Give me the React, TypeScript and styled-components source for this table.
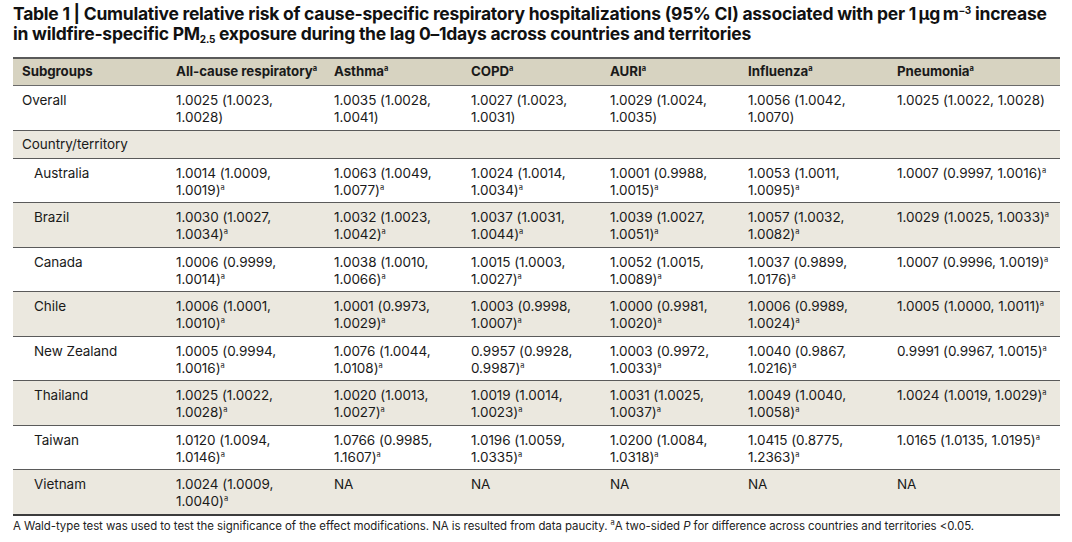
import React from "react";
import styled, { createGlobalStyle } from "styled-components";

const Global = createGlobalStyle`
  html, body { margin: 0; padding: 0; background: #ffffff; }
  body { font-family: "Inter", "Liberation Sans", sans-serif; color: #1a1a1a; }
`;

const Page = styled.div`
  width: 1072px;
  padding: 4px 12px 0 13px;
  box-sizing: border-box;
`;

const Title = styled.h1`
  margin: 0 0 13px 0;
  font-size: 17.5px;
  line-height: 20px;
  font-weight: 700;
  letter-spacing: -0.25px;
  white-space: nowrap;
  color: #111;
`;

const Sub = styled.sub`
  font-size: 10px;
  vertical-align: -3px;
  line-height: 0;
`;

const Sup = styled.sup<{ $small?: boolean }>`
  font-size: ${(p) => (p.$small ? "7.5px" : "10px")};
  vertical-align: ${(p) => (p.$small ? "5px" : "6px")};
  line-height: 0;
  font-weight: inherit;
`;

const Table = styled.table`
  width: 1047px;
  border-collapse: collapse;
  table-layout: fixed;
  font-size: 13.5px;
  line-height: 17px;
  border-top: 2px solid #5a5a5a;
  border-bottom: 2px solid #3c3c3c;
`;

const Col = styled.col<{ $w: number }>`
  width: ${(p) => p.$w}px;
`;

const HeadCell = styled.th`
  background: #d7d3c1;
  text-align: left;
  font-weight: 700;
  font-size: 13.3px;
  padding: 4px 4px 5px 9px;
  border-bottom: 1px solid #6a6a6a;
  letter-spacing: -0.05px;
  white-space: nowrap;
`;

const Row = styled.tr<{ $shade: boolean }>`
  background: ${(p) => (p.$shade ? "#ebe8df" : "#ffffff")};
  border-bottom: 1px solid #5a5a5a;
  &:last-child { border-bottom: none; }
`;

const Cell = styled.td<{ $indent?: boolean; $nowrap?: boolean }>`
  vertical-align: top;
  padding: 6px 9px 3.5px ${(p) => (p.$indent ? "21px" : "9px")};
  height: 34px;
  letter-spacing: -0.05px;
  white-space: ${(p) => (p.$nowrap ? "nowrap" : "normal")};
`;

const SectionCell = styled.td`
  padding: 5px 9px 5px 9px;
  letter-spacing: -0.05px;
`;

const Footnote = styled.p`
  margin: 3px 0 0 0;
  font-size: 11.45px;
  line-height: 14px;
  letter-spacing: -0.05px;
  color: #222;
`;

const widths = [154, 158, 137, 139, 138, 149, 172];
const headers = [
  { t: "Subgroups", a: false },
  { t: "All-cause respiratory", a: true },
  { t: "Asthma", a: true },
  { t: "COPD", a: true },
  { t: "AURI", a: true },
  { t: "Influenza", a: true },
  { t: "Pneumonia", a: true },
];

type V = [string, string, string] | null;
type R = { name: string; indent: boolean; sig: boolean; vals: V[] };

const rows: R[] = [
  {
    name: "Australia",
    indent: true,
    sig: true,
    vals: [
      ["1.0014", "1.0009", "1.0019"],
      ["1.0063", "1.0049", "1.0077"],
      ["1.0024", "1.0014", "1.0034"],
      ["1.0001", "0.9988", "1.0015"],
      ["1.0053", "1.0011", "1.0095"],
      ["1.0007", "0.9997", "1.0016"],
    ],
  },
  {
    name: "Brazil",
    indent: true,
    sig: true,
    vals: [
      ["1.0030", "1.0027", "1.0034"],
      ["1.0032", "1.0023", "1.0042"],
      ["1.0037", "1.0031", "1.0044"],
      ["1.0039", "1.0027", "1.0051"],
      ["1.0057", "1.0032", "1.0082"],
      ["1.0029", "1.0025", "1.0033"],
    ],
  },
  {
    name: "Canada",
    indent: true,
    sig: true,
    vals: [
      ["1.0006", "0.9999", "1.0014"],
      ["1.0038", "1.0010", "1.0066"],
      ["1.0015", "1.0003", "1.0027"],
      ["1.0052", "1.0015", "1.0089"],
      ["1.0037", "0.9899", "1.0176"],
      ["1.0007", "0.9996", "1.0019"],
    ],
  },
  {
    name: "Chile",
    indent: true,
    sig: true,
    vals: [
      ["1.0006", "1.0001", "1.0010"],
      ["1.0001", "0.9973", "1.0029"],
      ["1.0003", "0.9998", "1.0007"],
      ["1.0000", "0.9981", "1.0020"],
      ["1.0006", "0.9989", "1.0024"],
      ["1.0005", "1.0000", "1.0011"],
    ],
  },
  {
    name: "New Zealand",
    indent: true,
    sig: true,
    vals: [
      ["1.0005", "0.9994", "1.0016"],
      ["1.0076", "1.0044", "1.0108"],
      ["0.9957", "0.9928", "0.9987"],
      ["1.0003", "0.9972", "1.0033"],
      ["1.0040", "0.9867", "1.0216"],
      ["0.9991", "0.9967", "1.0015"],
    ],
  },
  {
    name: "Thailand",
    indent: true,
    sig: true,
    vals: [
      ["1.0025", "1.0022", "1.0028"],
      ["1.0020", "1.0013", "1.0027"],
      ["1.0019", "1.0014", "1.0023"],
      ["1.0031", "1.0025", "1.0037"],
      ["1.0049", "1.0040", "1.0058"],
      ["1.0024", "1.0019", "1.0029"],
    ],
  },
  {
    name: "Taiwan",
    indent: true,
    sig: true,
    vals: [
      ["1.0120", "1.0094", "1.0146"],
      ["1.0766", "0.9985", "1.1607"],
      ["1.0196", "1.0059", "1.0335"],
      ["1.0200", "1.0084", "1.0318"],
      ["1.0415", "0.8775", "1.2363"],
      ["1.0165", "1.0135", "1.0195"],
    ],
  },
  {
    name: "Vietnam",
    indent: true,
    sig: true,
    vals: [["1.0024", "1.0009", "1.0040"], null, null, null, null, null],
  },
];

const overall: V[] = [
  ["1.0025", "1.0023", "1.0028"],
  ["1.0035", "1.0028", "1.0041"],
  ["1.0027", "1.0023", "1.0031"],
  ["1.0029", "1.0024", "1.0035"],
  ["1.0056", "1.0042", "1.0070"],
  ["1.0025", "1.0022", "1.0028"],
];

function Value({ v, sig, last }: { v: V; sig: boolean; last: boolean }) {
  if (!v) return <>NA</>;
  const [e, lo, hi] = v;
  return (
    <>
      {e} ({lo},{last ? " " : <br />}
      {hi})
      {sig && <Sup $small>a</Sup>}
    </>
  );
}

export default function App() {
  return (
    <>
      <Global />
      <Page>
        <Title>
          Table 1 | Cumulative relative risk of cause-specific respiratory hospitalizations (95% CI) associated with per 1
          {"\u2009"}µg{"\u2009"}m<Sup>−3</Sup> increase
          <br />
          in wildfire-specific PM<Sub>2.5</Sub> exposure during the lag 0–1days across countries and territories
        </Title>
        <Table>
          <colgroup>
            {widths.map((w, i) => (
              <Col key={i} $w={w} />
            ))}
          </colgroup>
          <thead>
            <tr>
              {headers.map((h) => (
                <HeadCell key={h.t}>
                  {h.t}
                  {h.a && <Sup $small>a</Sup>}
                </HeadCell>
              ))}
            </tr>
          </thead>
          <tbody>
            <Row $shade={false}>
              <Cell>Overall</Cell>
              {overall.map((v, i) => (
                <Cell key={i} $nowrap={i === 5}>
                  <Value v={v} sig={false} last={i === 5} />
                </Cell>
              ))}
            </Row>
            <Row $shade={true}>
              <SectionCell colSpan={7}>Country/territory</SectionCell>
            </Row>
            {rows.map((r, ri) => (
              <Row key={r.name} $shade={ri % 2 === 1}>
                <Cell $indent={r.indent}>{r.name}</Cell>
                {r.vals.map((v, i) => (
                  <Cell key={i} $nowrap={i === 5}>
                    <Value v={v} sig={r.sig} last={i === 5} />
                  </Cell>
                ))}
              </Row>
            ))}
          </tbody>
        </Table>
        <Footnote>
          A Wald-type test was used to test the significance of the effect modifications. NA is resulted from data
          paucity. <Sup $small>a</Sup>A two-sided <i>P</i> for difference across countries and territories {"<"}0.05.
        </Footnote>
      </Page>
    </>
  );
}
